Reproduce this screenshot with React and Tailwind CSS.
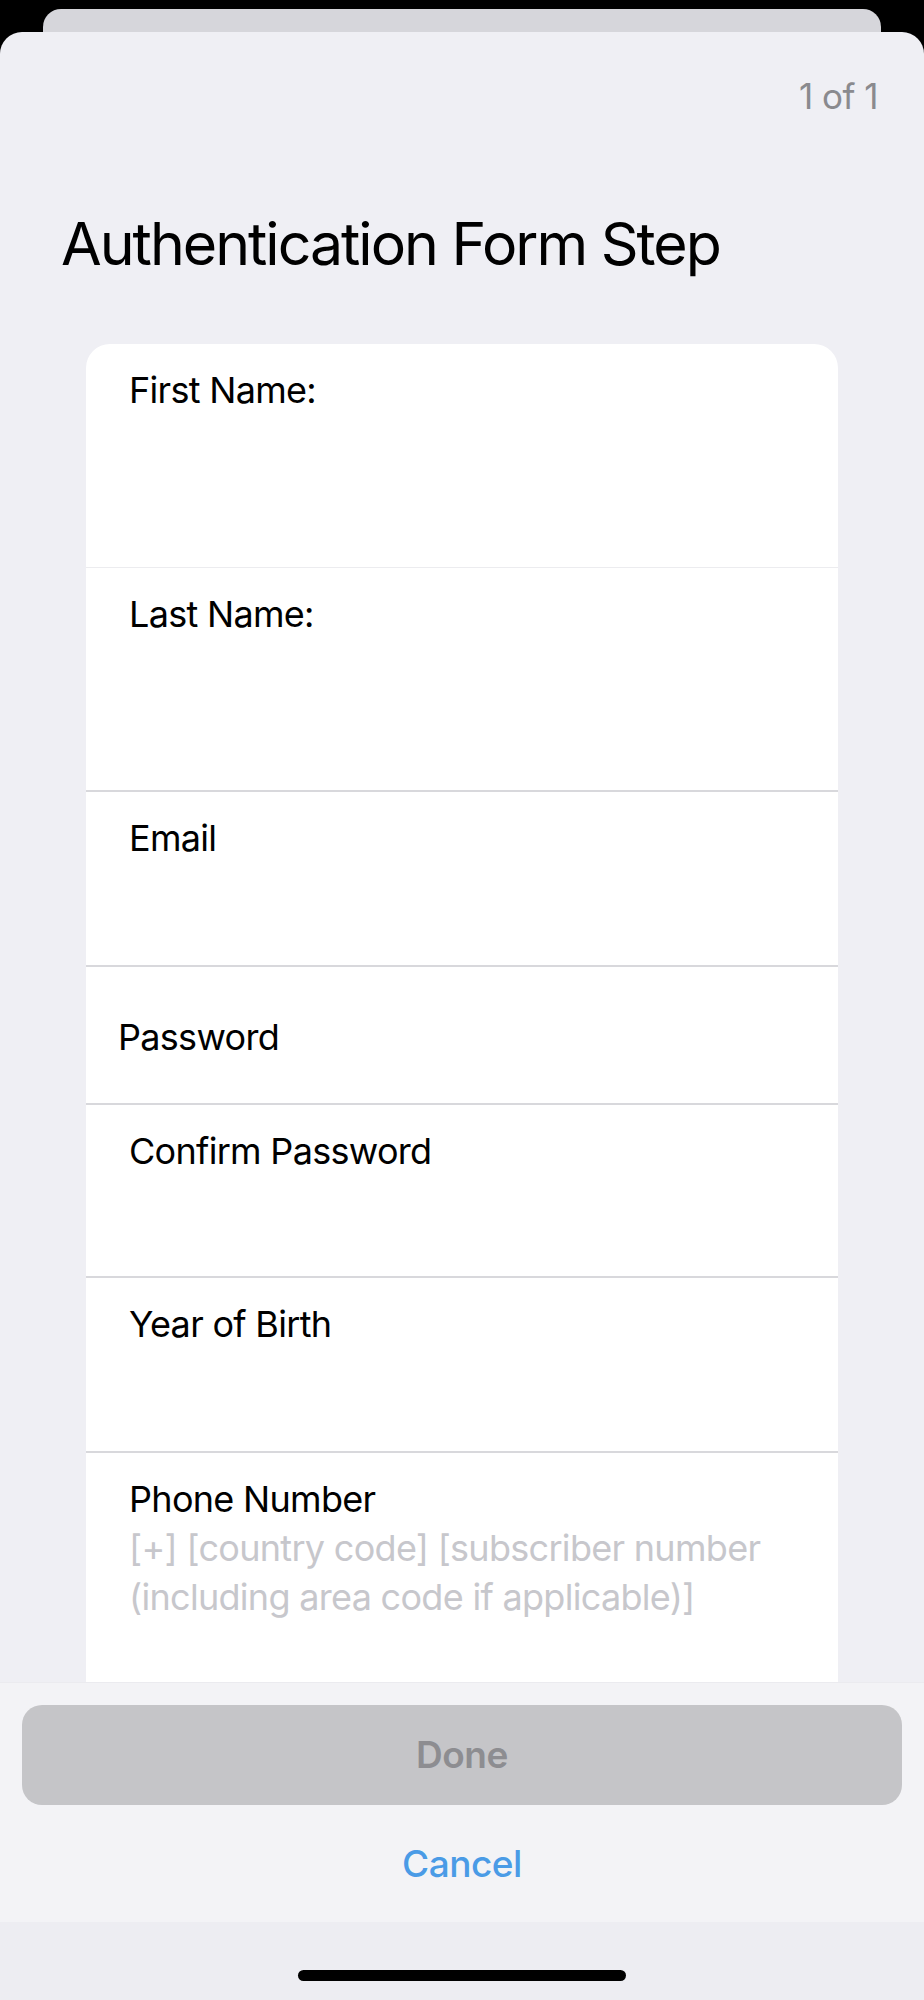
import React from "react";

const font = { fontFamily: "Inter, 'Noto Sans', sans-serif" };

function Field({ label, h, children, pl = "pl-[43px]", center = false, last = false }) {
  return (
    <div
      className={`${h} ${pl} ${center ? "flex items-center pt-[4px]" : "pt-[24px]"} ${
        last ? "" : "border-b-[2px] border-[#d8d8dc]"
      }`}
    >
      <div className="text-[36px] leading-[44px] tracking-[-0.7px] text-black">{label}</div>
      {children}
    </div>
  );
}

export default function App() {
  return (
    <div className="w-[924px] h-[2000px] bg-black overflow-hidden flex flex-col" style={font}>
      <div className="mx-[43px] mt-[9px] h-[23px] shrink-0 bg-[#d6d6db] rounded-t-[18px]" />
      <div className="relative flex-1 bg-[#efeff4] rounded-t-[22px] overflow-hidden">
        <div className="pt-[44px] pr-[46px] flex justify-end">
          <span className="text-[35px] leading-[40px] tracking-[-0.5px] text-[#8a8a8e]">1 of 1</span>
        </div>
        <h1 className="mt-[93px] pl-[61px] text-[59px] leading-[70px] text-black tracking-[-2px]">
          Authentication Form Step
        </h1>
        <div className="mt-[65px] mx-[86px] bg-white rounded-t-[24px]">
          <div className="h-[224px] pl-[43px] pt-[24px] border-b-[1px] border-[#ececef]">
            <div className="text-[36px] leading-[44px] tracking-[-0.7px] text-black">First Name:</div>
          </div>
          <Field label="Last Name:" h="h-[224px]" />
          <Field label="Email" h="h-[175px]" />
          <Field label="Password" h="h-[138px]" pl="pl-[32px]" center />
          <Field label="Confirm Password" h="h-[173px]" />
          <Field label="Year of Birth" h="h-[175px]" />
          <Field label="Phone Number" h="h-[400px]" last>
            <div className="mt-[3px] text-[36px] leading-[49px] tracking-[-0.7px] text-[#c7c7cc] pr-[40px]">
              [+] [country code] [subscriber number (including area code if applicable)]
            </div>
          </Field>
        </div>

        <div className="absolute left-0 right-0 bottom-0 flex flex-col">
          <div className="h-[240px] bg-[#f3f3f6] border-t border-[#ebebef] pt-[22px] px-[22px] flex flex-col">
            <div className="h-[100px] rounded-[20px] bg-[#c5c5c8] flex items-center justify-center">
              <span className="text-[37px] font-semibold tracking-[-0.5px] text-[#8d8d91]">Done</span>
            </div>
            <div className="flex-1 flex items-center justify-center">
              <span className="text-[37px] font-medium tracking-[-0.5px] text-[#4a9be6]">Cancel</span>
            </div>
          </div>
          <div className="h-[78px] bg-[#ededf2] flex justify-center pt-[48px]">
            <div className="w-[328px] h-[11px] rounded-full bg-black" />
          </div>
        </div>
      </div>
    </div>
  );
}
